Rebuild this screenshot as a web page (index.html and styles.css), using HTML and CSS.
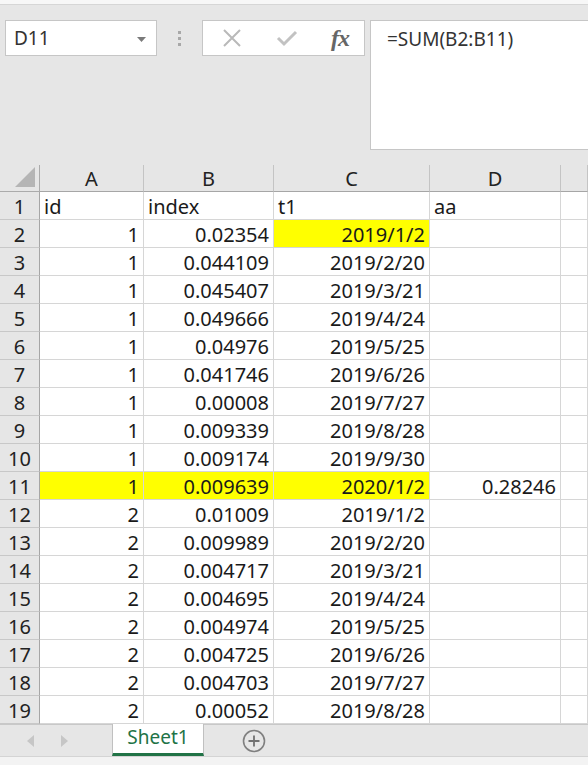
FILE: index.html
```html
<!DOCTYPE html>
<html>
<head>
<meta charset="utf-8">
<link rel="stylesheet" href="styles.css">
</head>
<body>
<div class="app">
  <div class="topstrip"></div>
  <div class="toolbar">
    <div class="namebox">
      <span class="nametext">D11</span>
      <svg class="dd" width="9" height="5" viewBox="0 0 9 5"><path d="M0 0H9L4.5 5Z" fill="#7a7a7a"/></svg>
    </div>
    <div class="grip"><i></i><i></i><i></i></div>
    <div class="fbtns">
      <svg class="ico" width="20" height="20" viewBox="0 0 20 20"><path d="M2 2L18 18M18 2L2 18" stroke="#b9b9b9" stroke-width="2" fill="none"/></svg>
      <svg class="ico" width="22" height="20" viewBox="0 0 22 20"><path d="M2 10L8 16L20 4" stroke="#c2c2c2" stroke-width="3" fill="none"/></svg>
      <span class="fx">fx</span>
    </div>
    <div class="formula">=SUM(B2:B11)</div>
  </div>
  <div class="sheet" id="sheet"></div>
  <div class="tabbar">
    <div class="navs">
      <svg width="8" height="12" viewBox="0 0 8 12"><path d="M7 0V12L0 6Z" fill="#c6c6c6"/></svg>
      <svg width="8" height="12" viewBox="0 0 8 12"><path d="M1 0V12L8 6Z" fill="#c6c6c6"/></svg>
    </div>
    <div class="tab">Sheet1</div>
    <svg class="plus" width="24" height="24" viewBox="0 0 24 24"><circle cx="12" cy="12" r="10.5" stroke="#808080" stroke-width="1.6" fill="none"/><path d="M12 6.5V17.5M6.5 12H17.5" stroke="#707070" stroke-width="1.8"/></svg>
  </div>
  <div class="status"></div>
</div>
<script>
var rows=[
["1","0.02354","2019/1/2",""],
["1","0.044109","2019/2/20",""],
["1","0.045407","2019/3/21",""],
["1","0.049666","2019/4/24",""],
["1","0.04976","2019/5/25",""],
["1","0.041746","2019/6/26",""],
["1","0.00008","2019/7/27",""],
["1","0.009339","2019/8/28",""],
["1","0.009174","2019/9/30",""],
["1","0.009639","2020/1/2","0.28246"],
["2","0.01009","2019/1/2",""],
["2","0.009989","2019/2/20",""],
["2","0.004717","2019/3/21",""],
["2","0.004695","2019/4/24",""],
["2","0.004974","2019/5/25",""],
["2","0.004725","2019/6/26",""],
["2","0.004703","2019/7/27",""],
["2","0.00052","2019/8/28",""]
];
var h='<div class="corner"><svg width="22" height="22" viewBox="0 0 22 22"><path d="M21 1V21H1Z" fill="#b5b5b5"/></svg></div>';
["A","B","C","D",""].forEach(function(c){h+='<div class="colh">'+c+'</div>';});
h+='<div class="rowh">1</div><div class="cell l">id</div><div class="cell l">index</div><div class="cell l">t1</div><div class="cell l">aa</div><div class="cell"></div>';
rows.forEach(function(r,i){
  var n=i+2;
  h+='<div class="rowh">'+n+'</div>';
  r.forEach(function(v,j){
    var y=(n===11&&j<3)||(n===2&&j===2);
    h+='<div class="cell r'+(y?' y':'')+'">'+v+'</div>';
  });
  h+='<div class="cell"></div>';
});
document.getElementById('sheet').innerHTML=h;
</script>
</body>
</html>
```
FILE: styles.css
```css
html,body{margin:0;padding:0;}
body{width:588px;height:765px;overflow:hidden;background:#e6e6e6;font-family:"Noto Sans","Liberation Sans",Arial,sans-serif;color:#1a1a1a;}
.app{display:flex;flex-direction:column;height:765px;}
.topstrip{height:4px;background:#f7f7f7;border-bottom:1px solid #d6d6d6;}
.toolbar{height:160px;display:flex;align-items:flex-start;padding:15px 0 0 5px;box-sizing:border-box;}
.namebox{width:152px;height:36px;box-sizing:border-box;background:#fff;border:1px solid #c6c6c6;display:flex;align-items:center;justify-content:space-between;padding:0 10px 0 8px;}
.nametext{font-size:19px;line-height:1;color:#333;}
.dd{margin-top:2px;}
.grip{width:45px;height:36px;display:flex;flex-direction:column;align-items:center;justify-content:center;gap:3px;}
.grip i{display:block;width:3px;height:3px;background:#a8a8a8;}
.fbtns{width:163px;height:36px;box-sizing:border-box;background:#fff;border:1px solid #c6c6c6;display:flex;align-items:center;justify-content:space-between;padding:0 15px 0 19px;}
.fx{font-family:"Liberation Serif","Times New Roman",serif;font-style:italic;font-weight:bold;font-size:24px;line-height:1;color:#666;letter-spacing:-1px;}
.formula{flex:1;margin-left:5px;height:130px;box-sizing:border-box;background:#fff;border:1px solid #c6c6c6;border-right:none;font-size:19px;line-height:1.3;color:#333;padding:6px 0 0 16px;}
.sheet{display:grid;grid-template-columns:40px 104px 130px 156px 131px 27px;grid-template-rows:27px repeat(19,28px);background:#fff;line-height:1.2;}
.corner{background:#e6e6e6;border-right:1px solid #ababab;border-bottom:1px solid #ababab;display:flex;align-items:flex-end;justify-content:flex-end;padding:0 3px 3px 0;box-sizing:border-box;}
.colh{background:#e6e6e6;border-right:1px solid #c4c4c4;border-bottom:1px solid #a6a6a6;box-sizing:border-box;display:flex;align-items:flex-end;justify-content:center;font-size:20px;padding-bottom:0;color:#222;}
.rowh{background:#e6e6e6;border-right:1px solid #a6a6a6;border-bottom:1px solid #c8c8c8;box-sizing:border-box;display:flex;align-items:flex-end;justify-content:center;font-size:20px;padding-bottom:0;color:#222;}
.cell{border-right:1px solid #d6d6d6;border-bottom:1px solid #d6d6d6;box-sizing:border-box;display:flex;align-items:flex-end;font-size:20px;padding:0 4px 0 4px;white-space:nowrap;overflow:hidden;}
.cell.r{justify-content:flex-end;}
.cell.l{justify-content:flex-start;}
.cell.y{background:#ffff00;}
.tabbar{height:31px;display:flex;align-items:stretch;background:#e6e6e6;border-top:1px solid #c8c8c8;}
.navs{width:112px;display:flex;align-items:center;gap:25px;padding-left:27px;box-sizing:border-box;}
.tab{width:92px;margin-top:-1px;background:#fff;border-left:1px solid #c0c0c0;border-right:1px solid #c0c0c0;border-bottom:3px solid #217346;box-sizing:border-box;color:#217346;font-size:19px;display:flex;align-items:center;justify-content:center;padding-bottom:3px;}
.plus{margin:4px 0 0 38px;}
.status{flex:1;background:#f3f3f3;border-top:1px solid #d4d4d4;}
```
